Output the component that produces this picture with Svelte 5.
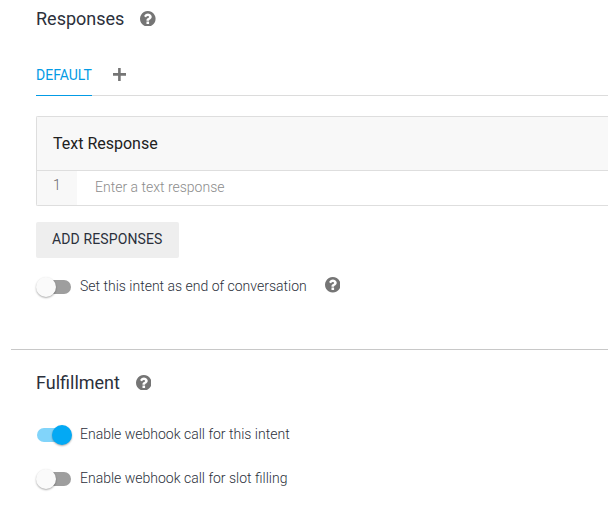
<script>
  let end = $state(false);
  let intent = $state(true);
  let slot = $state(false);
</script>

{#snippet help()}
  <svg class="help" viewBox="0 128 1536 1536" aria-hidden="true"><path d="M896 1376v-192q0-14-9-23t-23-9H672q-14 0-23 9t-9 23v192q0 14 9 23t23 9h192q14 0 23-9t9-23zm256-672q0-88-55.5-163T958 425t-170-41q-243 0-371 213-15 24 8 42l132 100q7 6 19 6 16 0 25-12 53-68 86-92 34-24 86-24 48 0 85.5 26t37.5 59q0 38-20 61t-68 45q-63 28-115.5 86.5T640 1020v36q0 14 9 23t23 9h192q14 0 23-9t9-23q0-19 21.5-49.5T972 957q32-18 49-28.5t46-35 44.5-48 28-60.5 12.5-81zm384 192q0 209-103 385.5T1153.5 1561 768 1664t-385.5-103T103 1281.5 0 896t103-385.5T382.5 231 768 128t385.5 103T1433 510.5 1536 896z" /></svg>
{/snippet}

{#snippet toggle(on, flip)}
  <button class="switch" class:on role="switch" aria-checked={on} aria-label="Toggle" onclick={flip}>
    <span class="bar"></span><span class="thumb"></span>
  </button>
{/snippet}

<main>
  <section class="responses">
    <h2><span>Responses</span>{@render help()}</h2>
    <nav>
      <span class="tab">DEFAULT</span>
      <svg class="plus" viewBox="0 0 13 13"><path d="M5.1 0h2.6v5.1H13v2.6H7.7V13H5.1V7.7H0V5.1h5.1z" /></svg>
    </nav>
    <div class="card">
      <header>Text Response</header>
      <div class="entry"><span class="number">1</span><span class="hint">Enter a text response</span></div>
    </div>
    <button class="add">ADD RESPONSES</button>
    <div class="option first">
      {@render toggle(end, () => (end = !end))}
      <span class="label">Set this intent as end of conversation</span>
      {@render help()}
    </div>
  </section>
  <hr />
  <section>
    <h2 class="fulfil"><span>Fulfillment</span>{@render help()}</h2>
    <div class="option second">
      {@render toggle(intent, () => (intent = !intent))}
      <span class="label">Enable webhook call for this intent</span>
    </div>
    <div class="option third">
      {@render toggle(slot, () => (slot = !slot))}
      <span class="label">Enable webhook call for slot filling</span>
    </div>
  </section>
</main>

<style>
  :global(body) { background: #fff; }
  main {
    box-sizing: border-box;
    width: 608px;
    height: 516px;
    overflow: hidden;
    font-family: Roboto, "Liberation Sans", sans-serif;
    color: #2b303b;
  }
  section { padding-left: 36px; }
  .responses { height: 349px; box-sizing: border-box; }
  h2 {
    display: flex;
    align-items: center;
    gap: 15.7px;
    height: 37px;
    padding-bottom: 1px;
    margin: 0;
    font-size: 18px;
    font-weight: 400;
    line-height: 38px;
  }
  .help { display: block; width: 15.6px; height: 15.6px; fill: #757575; flex: none; }
  nav {
    display: flex;
    height: 58px;
    box-sizing: border-box;
    border-bottom: 1px solid #dcdcdc;
  }
  .tab {
    box-sizing: border-box;
    height: 58px;
    margin-bottom: -1px;
    border-bottom: 1px solid #039be5;
    color: #039be5;
    font-size: 14px;
    line-height: 75px;
  }
  .plus { width: 13px; height: 13px; margin: 30px 0 0 21px; fill: #757575; }
  .card {
    margin-top: 20px;
    border: 1px solid #dedede;
    border-right: 0;
    border-radius: 2px 0 0 2px;
    box-sizing: border-box;
    height: 90px;
  }
  header {
    height: 53px;
    padding-left: 16px;
    border-bottom: 1px solid #dedede;
    background: #f8f8f8;
    color: #212121;
    font-size: 16px;
    line-height: 53px;
  }
  .entry { display: flex; height: 34px; font-size: 14px; font-weight: 300; }
  .number {
    box-sizing: border-box;
    width: 40px;
    padding-left: 16px;
    background: #f8f8f8;
    color: #666;
    line-height: 29px;
  }
  .hint { padding-left: 18px; color: #8c8c8c; line-height: 33px; }
  button { padding: 0; border: 0; font-family: inherit; cursor: pointer; }
  .add {
    display: block;
    width: 143px;
    height: 36px;
    padding: 0 0 2px 16px;
    margin-top: 16px;
    border-radius: 2px;
    background: #eee;
    color: #2b303b;
    font-size: 14px;
    line-height: 34px;
    letter-spacing: 0.12px;
    text-align: left;
  }
  .option { display: flex; align-items: center; height: 22px; font-size: 14px; font-weight: 300; }
  .first { margin-top: 18px; }
  .second { margin-top: 21px; }
  .third { margin-top: 22px; }
  .label { height: 22px; margin-left: 8px; line-height: 20px; }
  .option .help { margin: 0 0 4px 18.2px; }
  .switch { position: relative; width: 36px; height: 20px; background: none; flex: none; }
  .bar {
    position: absolute;
    left: 1px;
    top: 3px;
    width: 34px;
    height: 14px;
    border-radius: 7px;
    background: #9e9e9e;
  }
  .thumb {
    position: absolute;
    left: 0;
    top: 0;
    width: 20px;
    height: 20px;
    border-radius: 50%;
    background: #fafafa;
    box-shadow: 0 1px 2px #0005;
  }
  .on .bar { background: #81d4fa; }
  .on .thumb { left: 16px; background: #03a9f4; }
  hr { height: 1px; margin: 0 0 0 11px; border: 0; background: #c8c8c8; }
  .fulfil { height: 39px; padding-top: 13px; line-height: 40px; }
</style>
